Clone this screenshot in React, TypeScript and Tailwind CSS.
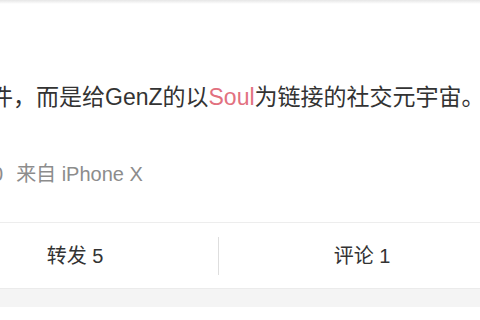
export default function App() {
  return (
    <div className="w-[480px] h-[320px] overflow-hidden bg-white font-['Liberation_Sans','Noto_Sans_CJK_SC',sans-serif]">
      <div className="h-[4px] bg-linear-to-b from-[#e6e6e6] to-white" />

      {/* post body */}
      <p className="mt-[78px] ml-[-10px] whitespace-nowrap text-[23px] leading-[30px] text-[#333]">
        件，而是给GenZ的以<span className="text-[#e2717f]">Soul</span>为链接的社交元宇宙。
      </p>

      {/* meta */}
      <div className="mt-[48px] ml-[-8px] flex items-center whitespace-nowrap text-[20px] leading-[28px] text-[#8c8c8c]">
        <span>0</span>
        <span className="ml-[13px]">来自 iPhone X</span>
      </div>

      {/* actions */}
      <div className="mt-[34px] border-t border-[#ededed]">
        <div className="ml-[-68px] flex h-[65px] items-center whitespace-nowrap text-[20px] text-[#333]">
          <div className="w-[286px] shrink-0 text-center">转发 5</div>
          <div className="h-[38px] w-px shrink-0 bg-[#dedede]" />
          <div className="w-[286px] shrink-0 text-center">评论 1</div>
          <div className="h-[38px] w-px shrink-0 bg-[#dedede]" />
          <div className="w-[286px] shrink-0 text-center">赞 8</div>
        </div>
      </div>
      <div className="h-[19px] border-t border-[#ebebeb] bg-[#f4f4f4]" />
    </div>
  );
}
